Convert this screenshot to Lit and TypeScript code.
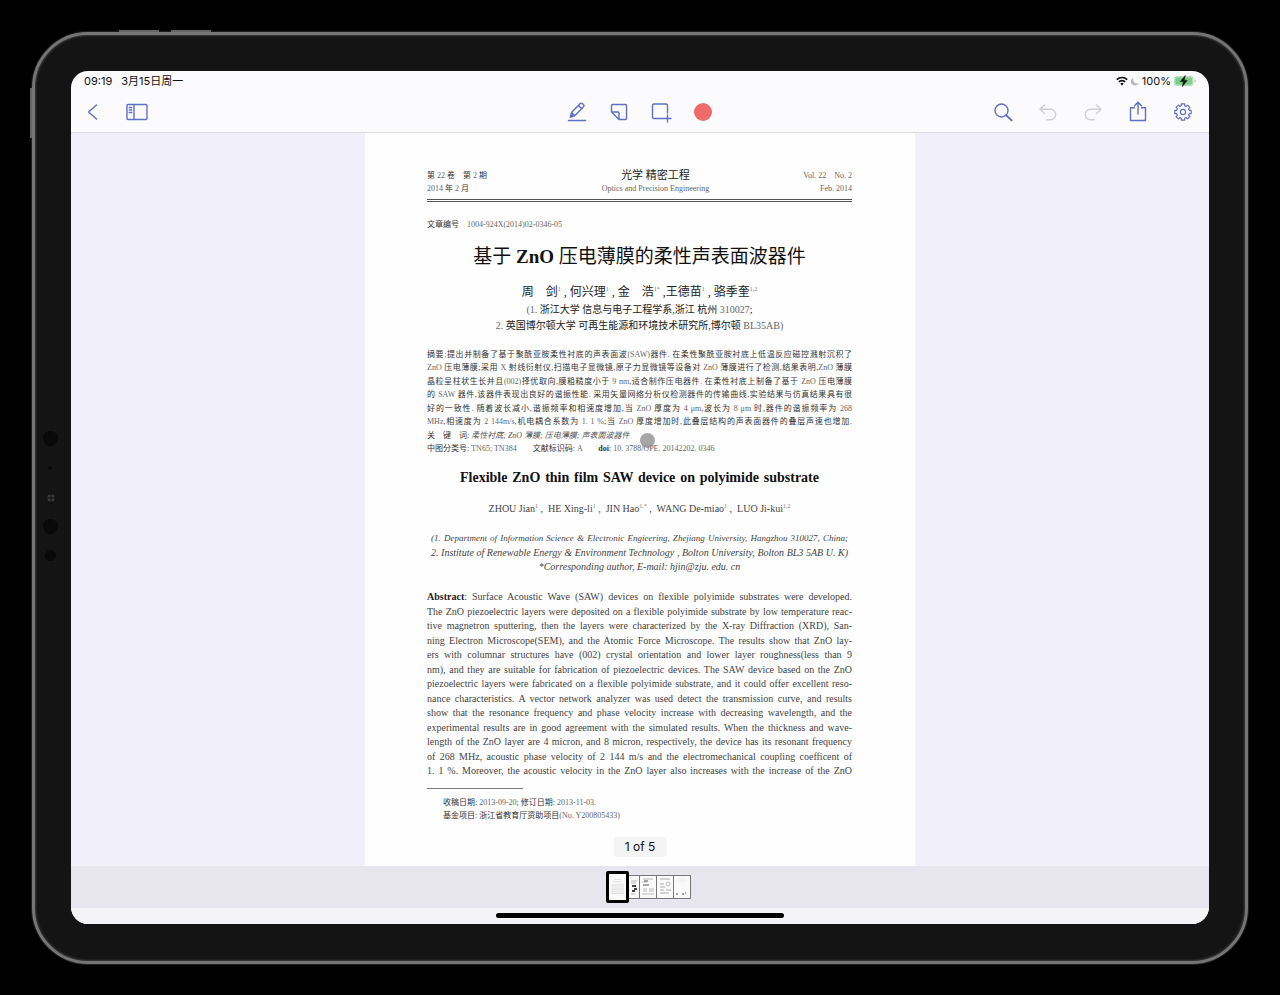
import { LitElement, html, css, svg } from "lit";
import { customElement, state } from "lit/decorators.js";
import { classMap } from "lit/directives/class-map.js";

const CN_ABSTRACT = [
  "摘要:提出并制备了基于聚酰亚胺柔性衬底的声表面波(SAW)器件. 在柔性聚酰亚胺衬底上低温反应磁控溅射沉积了",
  "ZnO 压电薄膜;采用 X 射线衍射仪,扫描电子显微镜,原子力显微镜等设备对 ZnO 薄膜进行了检测,结果表明,ZnO 薄膜",
  "晶粒呈柱状生长并且(002)择优取向,膜粗糙度小于 9 nm,适合制作压电器件. 在柔性衬底上制备了基于 ZnO 压电薄膜",
  "的 SAW 器件,该器件表现出良好的谐振性能. 采用矢量网络分析仪检测器件的传输曲线,实验结果与仿真结果具有很",
  "好的一致性. 随着波长减小,谐振频率和相速度增加,当 ZnO 厚度为 4 μm,波长为 8 μm 时,器件的谐振频率为 268",
  "MHz,相速度为 2 144m/s,机电耦合系数为 1. 1 %;当 ZnO 厚度增加时,此叠层结构的声表面器件的叠层声速也增加.",
];

const EN_ABSTRACT = [
  "The ZnO piezoelectric layers were deposited on a flexible polyimide substrate by low temperature reac-",
  "tive magnetron sputtering, then the layers were characterized by the X-ray Diffraction (XRD), San-",
  "ning Electron Microscope(SEM), and the Atomic Force Microscope. The results show that ZnO lay-",
  "ers with columnar structures have (002) crystal orientation and lower layer roughness(less than 9",
  "nm), and they are suitable for fabrication of piezoelectric devices. The SAW device based on the ZnO",
  "piezoelectric layers were fabricated on a flexible polyimide substrate, and it could offer excellent reso-",
  "nance characteristics. A vector network analyzer was used detect the transmission curve, and results",
  "show that the resonance frequency and phase velocity increase with decreasing wavelength, and the",
  "experimental results are in good agreement with the simulated results. When the thickness and wave-",
  "length of the ZnO layer are 4 micron, and 8 micron, respectively, the device has its resonant frequency",
  "of 268 MHz, acoustic phase velocity of 2 144 m/s and the electromechanical coupling coefficent of",
  "1. 1 %. Moreover, the acoustic velocity in the ZnO layer also increases with the increase of the ZnO",
];

/** Sets Latin letters and digits in the lighter tone used beside the Chinese type. */
const mixed = (text: string) =>
  text
    .split(/([A-Za-z0-9μ()\/%][A-Za-z0-9μ()\/%. \-]*)/)
    .map((part, i) => (i % 2 ? html`<span class="latin">${part}</span>` : part));

const gearPath = (() => {
  const pts: string[] = [];
  const teeth = 8;
  for (let i = 0; i < teeth; i++) {
    const base = (i * 2 * Math.PI) / teeth;
    for (const [offset, r] of [[-0.25, 6.5], [-0.2, 8.3], [0.2, 8.3], [0.25, 6.5]]) {
      const a = base + offset;
      pts.push(`${(11 + r * Math.sin(a)).toFixed(2)} ${(11 - r * Math.cos(a)).toFixed(2)}`);
    }
  }
  return `M${pts.join("L")}Z`;
})();

const ICONS = {
  back: svg`<path d="M14.5 4 6.500 11l8 7"/>`,
  sidebar: svg`<rect x="1" y="3.500" width="20" height="15" rx="1"/><path d="M8 3.500v15M3.200 6.500h2.600M3.200 9h2.600M3.200 11.500h2.600"/>`,
  pen: svg`<path d="M2.500 19.500h17M4.300 16.200l1.200-4.700 8.800-9a1.400 1.400 0 0 1 2 0l1.300 1.300a1.400 1.400 0 0 1 0 2l-8.900 9zM5.500 11.500l3.200 3.300M12.400 4.500l3.300 3.200M4.300 16.200l2.400-2.400"/>`,
  note: svg`<path d="M3.500 11V4.500a1 1 0 0 1 1-1h13a1 1 0 0 1 1 1v13a1 1 0 0 1-1 1H11zM3.500 11h6.500a1 1 0 0 1 1 1v6.500"/>`,
  add: svg`<path d="M14 17.500H4a1.500 1.500 0 0 1-1.500-1.500V4.500A1.500 1.500 0 0 1 4 3h12A1.500 1.500 0 0 1 17.500 4.500V12M17.500 14v7M14 17.500h7"/>`,
  search: svg`<circle cx="9.500" cy="9.500" r="6.500"/><path d="m14.200 14.200 5.400 5.200" stroke-width="2"/>`,
  undo: svg`<path d="M7.500 4 3 8.300l4.500 4.300M3 8.300h10.500a5.200 5.200 0 0 1 0 10.400H9.500"/>`,
  redo: svg`<path d="M14.500 4 19 8.300l-4.500 4.300M19 8.300H8.500a5.200 5.200 0 0 0 0 10.400h4"/>`,
  share: svg`<path d="M7.500 6.800H3.500v12.700h15V6.800h-4M11 13V1.500M7.500 4.800 11 1.300l3.500 3.500"/>`,
  gear: svg`<g stroke-width="1.200"><path d=${gearPath}/><circle cx="11" cy="11" r="2.600"/></g>`,
};

@customElement("tool-button")
class ToolButton extends LitElement {
  static properties = { icon: {}, label: {}, disabled: { type: Boolean } };
  declare icon: keyof typeof ICONS | "record";
  declare label: string;
  declare disabled: boolean;

  static styles = css`
    :host { display: block; }
    button {
      display: flex; align-items: center; justify-content: center;
      width: 100%; height: 40px; margin: 0; padding: 0;
      border: 0; background: none; color: #5f70c4;
    }
    button:disabled { color: #cfcfd4; }
    svg { width: 22px; height: 22px; fill: none; stroke: currentColor; stroke-width: 1.4; stroke-linejoin: round; stroke-linecap: round; }
    .dot { width: 18px; height: 18px; border-radius: 50%; background: #ed6b68; }
  `;

  render() {
    return html`<button type="button" aria-label=${this.label} ?disabled=${this.disabled}>
      ${this.icon === "record"
        ? html`<span class="dot"></span>`
        : html`<svg viewBox="0 0 22 22" aria-hidden="true">${ICONS[this.icon]}</svg>`}
    </button>`;
  }
}

@customElement("paper-page")
class PaperPage extends LitElement {
  static styles = css`
    :host {
      display: block; box-sizing: border-box; width: 550px; padding: 36px 63px 0 62px;
      background: #fefefe; color: #333;
      font-family: "Liberation Serif", "Noto Sans CJK SC", serif;
      font-size: 8px; line-height: 13px;
    }
    h1, h2, p { margin: 0; font-weight: 400; }
    sup { font-size: 6px; line-height: 0; color: #777; }
    .latin { color: #666; }
    .masthead { display: grid; grid-template-columns: 1fr auto 1fr; padding-bottom: 4px; border-bottom: 3px double #555; white-space: pre; }
    .journal { font-size: 11px; color: #222; }
    .center { padding-left: 32px; text-align: center; }
    .right { text-align: right; }
    .muted { color: #666; }
    .number { margin-top: 16px; white-space: pre; }
    h1 { margin-top: 13px; font-size: 19px; line-height: 26px; color: #111; text-align: center; white-space: nowrap; }
    .authors { margin-top: 14px; font-size: 12px; line-height: 16px; color: #222; white-space: pre; text-align: center; }
    .affil { margin-top: 2px; font-size: 10px; line-height: 16px; color: #222; text-align: center; white-space: nowrap; }
    .lines { display: flex; flex-direction: column; justify-content: space-between; white-space: nowrap; }
    .cn { margin-top: 14px; min-height: 107px; }
    .fill { text-align-last: justify; }
    .keys { white-space: pre; }
    .keys i { color: #555; }
    h2 { margin-top: 14px; padding: 0 33px; font-size: 14px; line-height: 18px; font-weight: 700; color: #111; text-align-last: justify; white-space: nowrap; }
    .names { margin-top: 14px; font-size: 10px; line-height: 15px; color: #444; text-align: center; white-space: pre; }
    .address { margin-top: 15px; min-height: 43px; font-size: 10px; line-height: 14px; font-style: italic; color: #444; text-align: center; }
    .address .fill { padding: 0 4px; }
    .address .long { font-size: 9px; }
    .en { margin-top: 16px; min-height: 188px; font-size: 10px; line-height: 14px; color: #444; }
    .en b { color: #222; }
    .foot { margin-top: 10px; }
    .foot hr { width: 96px; height: 1px; margin: 0 0 7px; border: 0; background: #777; }
    .foot p { padding-left: 16px; }
  `;

  render() {
    return html`
      <header class="masthead">
        <p>${mixed("第 22 卷　第 2 期")}</p>
        <p class="journal center">光学 精密工程</p>
        <p class="right muted">Vol. 22　No. 2</p>
        <p>${mixed("2014 年 2 月")}</p>
        <p class="center muted">Optics and Precision Engineering</p>
        <p class="right muted">Feb. 2014</p>
      </header>
      <p class="number">文章编号　<span class="latin">1004-924X(2014)02-0346-05</span></p>
      <h1>基于 <b>ZnO</b> 压电薄膜的柔性声表面波器件</h1>
      <p class="authors">周　剑<sup>1</sup> , 何兴理<sup>1</sup> , 金　浩<sup>1*</sup> ,王德苗<sup>1</sup> , 骆季奎<sup>1,2</sup></p>
      <div class="affil">
        <p>${mixed("(1. 浙江大学 信息与电子工程学系,浙江 杭州 310027;")}</p>
        <p>${mixed("2. 英国博尔顿大学 可再生能源和环境技术研究所,博尔顿 BL35AB)")}</p>
      </div>
      <div class="lines cn">
        ${CN_ABSTRACT.map((line) => html`<p class="fill">${mixed(line)}</p>`)}
        <p class="keys">关　键　词: <i>柔性衬底; ZnO 薄膜; 压电薄膜; 声表面波器件</i></p>
        <p class="keys">中图分类号: <span class="latin">TN65; TN384</span>　　文献标识码: <span class="latin">A</span>　　<b>doi</b>: <span class="latin">10. 3788/OPE. 20142202. 0346</span></p>
      </div>
      <h2>Flexible ZnO thin film SAW device on polyimide substrate</h2>
      <p class="names">ZHOU Jian<sup>1</sup> ,  HE Xing-li<sup>1</sup> ,  JIN Hao<sup>1,*</sup> ,  WANG De-miao<sup>1</sup> ,  LUO Ji-kui<sup>1,2</sup></p>
      <div class="lines address">
        <p class="fill long">(1. Department of Information Science &amp; Electronic Engieering, Zhejiang University, Hangzhou 310027, China;</p>
        <p class="fill">2. Institute of Renewable Energy &amp; Environment Technology , Bolton University, Bolton BL3 5AB U. K)</p>
        <p>*Corresponding author, E-mail: hjin@zju. edu. cn</p>
      </div>
      <div class="lines en">
        <p class="fill"><b>Abstract</b>: Surface Acoustic Wave (SAW) devices on flexible polyimide substrates were developed.</p>
        ${EN_ABSTRACT.map((line) => html`<p class="fill">${line}</p>`)}
      </div>
      <footer class="foot">
        <hr />
        <p>${mixed("收稿日期: 2013-09-20; 修订日期: 2013-11-03.")}</p>
        <p>${mixed("基金项目: 浙江省教育厅资助项目(No. Y200805433)")}</p>
      </footer>
    `;
  }
}

@customElement("app-root")
class AppRoot extends LitElement {
  @state() private page = 1;
  private readonly total = 5;

  static styles = css`
    :host { display: flex; box-sizing: border-box; min-height: 100vh; padding: 32px 32px 31px; background: #000; font-family: Inter, "Noto Sans CJK SC", sans-serif; color: #111; }
    .device {
      position: relative; flex: 1; display: flex; box-sizing: border-box; padding: 36px 36px 37px;
      border: 3px solid #757575; border-radius: 56px; background: #141414;
      box-shadow: inset 0 0 2px 1px #3a3a3a, 0 0 1px 1px #222;
    }
    .key { position: absolute; background: #666; }
    .up { top: -5px; left: 84px; width: 40px; height: 2px; }
    .down { top: -5px; left: 136px; width: 40px; height: 2px; }
    .power { top: 53px; left: -5px; width: 2px; height: 50px; }
    .lens { position: absolute; left: 8px; width: 15px; height: 15px; border-radius: 50%; background: #090909; }
    .lens.a { top: 396px; }
    .lens.b { top: 484px; }
    .lens.c { top: 515px; left: 10px; width: 11px; height: 11px; }
    .lens.d { top: 431px; left: 13px; width: 4px; height: 4px; }
    .sensor { position: absolute; top: 459px; left: 12px; width: 8px; height: 8px; border-radius: 50%; background: radial-gradient(circle, #3a3a3a 1px, #191919 2px); background-size: 4px 4px; }
    .screen { flex: 1; display: flex; flex-direction: column; min-width: 0; border-radius: 17px; overflow: hidden; background: #fbfbfd; }
    .status { display: flex; justify-content: space-between; align-items: center; height: 20px; padding: 0 13px; font-size: 11px; line-height: 20px; }
    .status div { display: flex; align-items: center; gap: 9px; }
    .status .tray { gap: 3px; }
    .status svg { display: block; }
    .toolbar { display: grid; grid-template-columns: 1fr auto 1fr; height: 41px; align-items: center; border-bottom: 1px solid #dcdce0; }
    .group { display: flex; }
    .side tool-button { width: 45px; }
    .side:first-child tool-button { width: 44px; }
    .mid tool-button { width: 42px; }
    .end { justify-content: flex-end; padding-right: 4px; }
    .viewer { position: relative; flex: 1; display: flex; justify-content: center; background: #f1f0fa; overflow: hidden; }
    .badge { position: absolute; bottom: 9px; left: 50%; transform: translateX(-50%); padding: 0 11px; border-radius: 4px; background: #f4f4f5; font-size: 12px; line-height: 20px; white-space: nowrap; }
    .cursor { position: absolute; top: 300px; left: 50%; width: 15px; height: 15px; border-radius: 50%; background: rgba(130, 130, 130, 0.7); }
    .strip { display: flex; justify-content: center; align-items: center; height: 42px; padding-left: 16px; background: #e7e6ef; }
    .thumb { box-sizing: border-box; width: 17px; height: 24px; margin: 0; padding: 0; border: 1px solid #77777b; border-left-width: 0; background: #fafafb; }
    .thumb svg { display: block; width: 16px; height: 22px; }
    .thumb.current { z-index: 1; width: 23px; height: 32px; margin-right: -6px; border: 3px solid #000; border-radius: 2px; }
    .thumb.current svg { width: 17px; height: 26px; }
    .home { display: flex; justify-content: center; height: 11px; padding-top: 5px; background: #f4f4f6; }
    .home span { width: 288px; height: 5px; border-radius: 3px; background: #000; }
  `;

  private thumb(n: number) {
    const art = [
      svg`<path d="M5 4h6M4 6h8M2 9h12M2 11h12M2 13h12M2 15h12M2 17h12" stroke="#dedede"/>`,
      svg`<path d="M8 5h6M8 7h5M8 18h4" stroke="#bbb"/><path d="M9 10h4M11 13h3M9 15h3" stroke="#444" stroke-width="2"/>`,
      svg`<path d="M3 3h10M2 6h5M3 13h4M9 13h5M3 15h4M9 15h5M2 18h12" stroke="#bbb"/><path d="M3 9h6M4 5h4" stroke="#555"/>`,
      svg`<path d="M3 3h10M3 8h4M3 11h5M3 14h4M3 17h9M9 14h5" stroke="#aaa"/><circle cx="11" cy="8" r="2" stroke="#bbb"/>`,
      svg`<path d="M3 3h10M3 5h10" stroke="#eee"/><path d="M2 18h2M8 18h2M11 17h1" stroke="#555"/>`,
    ][n - 1];
    return html`<button
      type="button"
      aria-label="Page ${n}"
      class=${classMap({ thumb: true, current: n === this.page })}
      @click=${() => (this.page = n)}
    ><svg viewBox="0 0 16 22" fill="none" aria-hidden="true">${art}</svg></button>`;
  }

  render() {
    return html`
      <div class="device">
        <span class="key up"></span><span class="key down"></span><span class="key power"></span>
        <span class="lens a"></span><span class="lens d"></span><span class="sensor"></span>
        <span class="lens b"></span><span class="lens c"></span>
        <main class="screen">
          <div class="status">
            <div><span>09:19</span><span>3月15日周一</span></div>
            <div class="tray">
              <svg width="12" height="10" viewBox="0 0 12 10" fill="none" stroke="#111" stroke-width="1.700" aria-hidden="true">
                <path d="M.8 3.700a7.300 7.300 0 0 1 10.400 0M2.800 5.900a4.500 4.500 0 0 1 6.400 0"/><path d="M6 9.500 4.300 7.700a2.400 2.400 0 0 1 3.400 0z" fill="#111" stroke="none"/>
              </svg>
              <svg width="8" height="9" viewBox="0 0 8 9" aria-hidden="true"><path d="M2.500.8A4 4 0 1 0 7.600 6 3.900 3.900 0 0 1 2.500.8z" fill="#b9b9bd"/></svg>
              <span>100%</span>
              <svg width="22" height="12" viewBox="0 0 22 12" aria-hidden="true">
                <rect x="0" y="1" width="19.500" height="10" rx="3" fill="#b9dcbd"/><rect x="1.500" y="2.500" width="16.500" height="7" rx="1.700" fill="#78d086"/><path d="M20.500 4.300v3.400q1.300-.5 1.300-1.700t-1.300-1.700z" fill="#a8c8ab"/>
                <path d="M11.300.4 6.300 6.600h3.100L8.300 11.600l5-6.200h-3.100z" fill="#111" stroke="#111" stroke-width=".5"/>
              </svg>
            </div>
          </div>
          <nav class="toolbar">
            <div class="group side">
              <tool-button icon="back" label="返回"></tool-button>
              <tool-button icon="sidebar" label="边栏"></tool-button>
            </div>
            <div class="group mid">
              <tool-button icon="pen" label="批注"></tool-button>
              <tool-button icon="note" label="便笺"></tool-button>
              <tool-button icon="add" label="添加"></tool-button>
              <tool-button icon="record" label="录音"></tool-button>
            </div>
            <div class="group side end">
              <tool-button icon="search" label="搜索"></tool-button>
              <tool-button icon="undo" label="撤销" disabled></tool-button>
              <tool-button icon="redo" label="重做" disabled></tool-button>
              <tool-button icon="share" label="共享"></tool-button>
              <tool-button icon="gear" label="设置"></tool-button>
            </div>
          </nav>
          <section class="viewer">
            <paper-page></paper-page>
            <span class="cursor"></span>
            <div class="badge">${this.page} of ${this.total}</div>
          </section>
          <div class="strip">${Array.from({ length: this.total }, (_, i) => this.thumb(i + 1))}</div>
          <div class="home"><span></span></div>
        </main>
      </div>
    `;
  }
}
